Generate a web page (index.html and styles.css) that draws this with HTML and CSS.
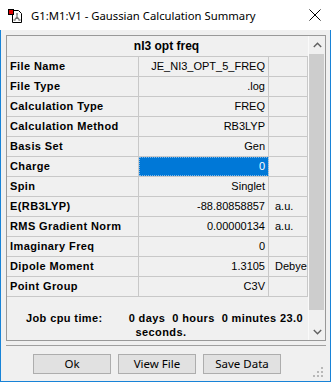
FILE: index.html
```html
<!DOCTYPE html>
<html lang="en">

<head>
  <meta charset="UTF-8" />
  <title>Gaussian Calculation Summary</title>
  <link rel="stylesheet" href="styles.css">
</head>

<body>

  <div class="window">

    <div class="titlebar">
      <svg class="app-icon" width="16" height="16" viewBox="0 0 16 16">
        <path d="M4.5 2.5h6l3 3v9h-9z" fill="#fff" stroke="#000" />
        <path d="M9 6v3M9 9l-2.5 3M9 9l2.5 3" stroke="#777" stroke-width="1.2" fill="none" />
        <rect x="8" y="5" width="2" height="2" fill="#999" />
        <rect x="5.5" y="11" width="2" height="2" fill="#999" />
        <rect x="10.5" y="11" width="2" height="2" fill="#999" />
        <rect x="0.5" y="1.5" width="5" height="5" fill="#e00000" stroke="#000" />
      </svg>
      <span class="title">G1:M1:V1 - Gaussian Calculation Summary</span>
      <svg class="close" width="12" height="12" viewBox="0 0 12 12">
        <path d="M0.5 0.5l11 11M11.5 0.5l-11 11" stroke="#000" stroke-width="1" fill="none" />
      </svg>
    </div>

    <div class="client">

      <div class="frame">
        <div class="grid-area">
          <div class="header">nI3 opt freq</div>

          <div class="row">
            <div class="label">File Name</div>
            <div class="value">JE_NI3_OPT_5_FREQ</div>
            <div class="unit"></div>
          </div>
          <div class="row">
            <div class="label">File Type</div>
            <div class="value">.log</div>
            <div class="unit"></div>
          </div>
          <div class="row">
            <div class="label">Calculation Type</div>
            <div class="value">FREQ</div>
            <div class="unit"></div>
          </div>
          <div class="row">
            <div class="label">Calculation Method</div>
            <div class="value">RB3LYP</div>
            <div class="unit"></div>
          </div>
          <div class="row">
            <div class="label">Basis Set</div>
            <div class="value">Gen</div>
            <div class="unit"></div>
          </div>
          <div class="row">
            <div class="label">Charge</div>
            <div class="value selected">0</div>
            <div class="unit"></div>
          </div>
          <div class="row">
            <div class="label">Spin</div>
            <div class="value">Singlet</div>
            <div class="unit"></div>
          </div>
          <div class="row">
            <div class="label">E(RB3LYP)</div>
            <div class="value">-88.80858857</div>
            <div class="unit">a.u.</div>
          </div>
          <div class="row">
            <div class="label">RMS Gradient Norm</div>
            <div class="value">0.00000134</div>
            <div class="unit">a.u.</div>
          </div>
          <div class="row">
            <div class="label">Imaginary Freq</div>
            <div class="value">0</div>
            <div class="unit"></div>
          </div>
          <div class="row">
            <div class="label">Dipole Moment</div>
            <div class="value">1.3105</div>
            <div class="unit">Debye</div>
          </div>
          <div class="row">
            <div class="label">Point Group</div>
            <div class="value">C3V</div>
            <div class="unit"></div>
          </div>

          <div class="cputime">
            <div class="cpu-line"><span>Job cpu time:</span><span>0 days  0 hours  0 minutes 23.0</span></div>
            <div class="cpu-rest">seconds.</div>
          </div>
        </div>

        <div class="scrollbar">
          <div class="arrow">
            <svg width="9" height="6" viewBox="0 0 9 6"><path d="M0.8 5L4.5 1.3 8.2 5" stroke="#606060" stroke-width="1.4" fill="none" /></svg>
          </div>
          <div class="track">
            <div class="thumb"></div>
          </div>
          <div class="arrow">
            <svg width="9" height="6" viewBox="0 0 9 6"><path d="M0.8 1L4.5 4.7 8.2 1" stroke="#606060" stroke-width="1.4" fill="none" /></svg>
          </div>
        </div>
      </div>

      <div class="separator"></div>

      <div class="buttons">
        <button>Ok</button>
        <button>View File</button>
        <button>Save Data</button>
      </div>

      <svg class="grip" width="10" height="10" viewBox="0 0 10 10">
        <rect x="8" y="0" width="2" height="2" fill="#b8b8b8" />
        <rect x="4" y="4" width="2" height="2" fill="#b8b8b8" />
        <rect x="8" y="4" width="2" height="2" fill="#b8b8b8" />
        <rect x="0" y="8" width="2" height="2" fill="#b8b8b8" />
        <rect x="4" y="8" width="2" height="2" fill="#b8b8b8" />
        <rect x="8" y="8" width="2" height="2" fill="#b8b8b8" />
      </svg>
    </div>

  </div>

</body>

</html>
```

FILE: styles.css
```css
body {
  margin: 0;
  font-family: 'Liberation Sans', Arial, sans-serif;
  background: #fff;
}

.window {
  width: 331px;
  height: 382px;
  position: relative;
}

.titlebar {
  height: 30px;
  background: #fff;
  display: flex;
  align-items: center;
  padding-left: 8px;
  box-sizing: border-box;
}

.app-icon {
  margin-top: 1px;
}

.title {
  margin-left: 7px;
  font-family: 'Noto Sans', sans-serif;
  font-size: 11.3px;
  color: #000;
}

.close {
  margin-left: auto;
  margin-right: 10px;
}

.client {
  height: 352px;
  background: #f0f0f0;
  border: 1px solid #1883d7;
  border-top: none;
  box-sizing: border-box;
  position: relative;
  padding-top: 5px;
}

.frame {
  margin-left: 5px;
  width: 320px;
  height: 306px;
  border: 1px solid #999;
  box-sizing: border-box;
  display: flex;
}

.grid-area {
  width: 301px;
  font-size: 11px;
  color: #000;
}

.header {
  height: 20px;
  line-height: 20px;
  border-bottom: 1px solid #c8c8c8;
  font-weight: bold;
  font-size: 12px;
  text-align: center;
  padding-left: 18px;
}

.row {
  display: flex;
  height: 20px;
  border-bottom: 1px solid #c8c8c8;
  box-sizing: border-box;
  line-height: 19px;
}

.label {
  width: 132px;
  border-right: 1px solid #c8c8c8;
  box-sizing: border-box;
  padding-left: 3px;
  font-weight: bold;
  letter-spacing: 0.4px;
  white-space: nowrap;
}

.value {
  width: 130px;
  border-right: 1px solid #c8c8c8;
  box-sizing: border-box;
  padding-right: 3px;
  text-align: right;
  white-space: nowrap;
}

.value.selected {
  background: #0078d7;
  color: #fff;
  outline: 1px dotted #7fb8e8;
  outline-offset: -1px;
}

.unit {
  width: 39px;
  border-right: 1px solid #c8c8c8;
  box-sizing: border-box;
  padding-left: 6px;
  white-space: nowrap;
}

.cputime {
  padding-top: 14px;
  font-weight: bold;
  letter-spacing: 0.4px;
  line-height: 14px;
}

.cpu-line {
  display: flex;
  justify-content: center;
  gap: 26px;
  padding-left: 14px;
  white-space: pre;
}

.cpu-rest {
  text-align: center;
  padding-left: 7px;
}

.scrollbar {
  width: 17px;
  display: flex;
  flex-direction: column;
  background: #f0f0f0;
  border-left: 1px solid #fafafa;
  box-sizing: border-box;
}

.arrow {
  height: 17px;
  display: flex;
  align-items: center;
  justify-content: center;
}

.track {
  flex: 1;
  padding: 1px 0 13px 0;
}

.thumb {
  height: 256px;
  margin: 0 1px 0 0;
  background: #cdcdcd;
}

.separator {
  margin: 4px 0 0 5px;
  width: 320px;
  height: 1px;
  background: #a0a0a0;
}

.buttons {
  display: flex;
  gap: 7px;
  padding-left: 32px;
  margin-top: 8px;
}

button {
  width: 78px;
  height: 20px;
  padding: 0;
  background: #e1e1e1;
  border: 1px solid #adadad;
  font-family: 'Noto Sans', sans-serif;
  font-size: 11.5px;
  color: #000;
  line-height: 16px;
}

.grip {
  position: absolute;
  right: 7px;
  bottom: 4px;
}
```
